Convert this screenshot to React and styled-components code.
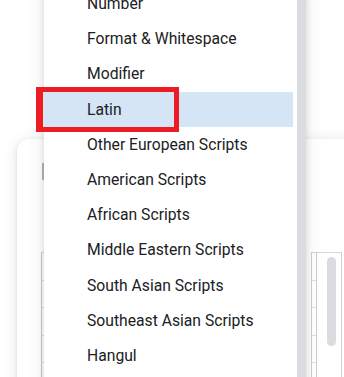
import React from "react";
import styled, { createGlobalStyle } from "styled-components";

const GlobalStyle = createGlobalStyle`
  html, body { margin: 0; padding: 0; background: #ffffff; overflow: hidden; }
  body { font-family: Roboto, "Noto Sans", Arial, sans-serif; }
  * { box-sizing: border-box; }
`;

const Stage = styled.div`
  position: relative;
  width: 344px;
  height: 377px;
  overflow: hidden;
  background: #ffffff;
  padding: 139px 0 0 17px;
`;

const Card = styled.div`
  width: 420px;
  height: 320px;
  background: #ffffff;
  border-radius: 12px 0 0 0;
  box-shadow: 0 1px 3px rgba(60, 64, 67, 0.12), 0 2px 14px rgba(60, 64, 67, 0.14);
  display: flex;
  flex-direction: column;
  padding: 24px 0 0 25px;
`;

const Caret = styled.div`
  width: 2px;
  height: 17px;
  background: #b3b3b3;
`;

const Grid = styled.div`
  display: flex;
  margin-top: 72px;
  margin-left: -1px;
  align-items: flex-start;
`;

const MainCol = styled.div`
  width: 265px;
  border-left: 1px solid #c9c9c9;
  border-top: 1px solid #d6d6d6;
  display: flex;
  flex-direction: column;
`;

const StubCol = styled.div`
  width: 5px;
  margin-left: 5px;
  border-left: 1px solid #d0d0d0;
  border-top: 1px solid #d6d6d6;
  display: flex;
  flex-direction: column;
`;

const Cell = styled.div`
  height: ${(p) => p.$h}px;
  border-bottom: 1px solid #dedede;
`;

const ScrollCol = styled.div`
  width: 26px;
  height: 200px;
  border-left: 1px solid #d0d0d0;
  border-right: 1px solid #d0d0d0;
  border-top: 1px solid #d6d6d6;
  padding: 4px 0 0 10px;
`;

const Thumb = styled.div`
  width: 9px;
  height: 89px;
  border-radius: 5px;
  background: #dadce0;
`;

const Menu = styled.div`
  position: absolute;
  left: 44px;
  top: -14px;
  width: 262px;
  height: 440px;
  background: #ffffff;
  display: flex;
  box-shadow: 0 2px 6px rgba(60, 64, 67, 0.15), 0 4px 16px rgba(60, 64, 67, 0.12);
`;

const List = styled.ul`
  list-style: none;
  margin: 0;
  padding: 0;
  width: 249px;
  display: flex;
  flex-direction: column;
`;

const Item = styled.li`
  height: 35.2px;
  flex: none;
  display: flex;
  align-items: center;
  padding-left: 43px;
  font-size: 15.7px;
  color: #202124;
  white-space: nowrap;
  background: ${(p) => (p.$active ? "#d5e5f6" : "transparent")};
`;

const MenuScroll = styled.div`
  width: 9px;
  margin-left: 4px;
  background: #dadce0;
`;

const Highlight = styled.div`
  position: absolute;
  left: 36px;
  top: 87px;
  width: 143px;
  height: 45px;
  border: 5px solid #ed1c24;
  border-left-width: 7px;
  pointer-events: none;
`;

const items = [
  "Number",
  "Format & Whitespace",
  "Modifier",
  "Latin",
  "Other European Scripts",
  "American Scripts",
  "African Scripts",
  "Middle Eastern Scripts",
  "South Asian Scripts",
  "Southeast Asian Scripts",
  "Hangul",
  "Other East Asian Scripts",
];

const rowHeights = [28, 27, 28, 27, 28, 27];

export default function App() {
  return (
    <>
      <GlobalStyle />
      <Stage>
        <Card>
          <Caret />
          <Grid>
            <MainCol>
              {rowHeights.map((h, i) => (
                <Cell key={i} $h={h} />
              ))}
            </MainCol>
            <StubCol>
              {rowHeights.map((h, i) => (
                <Cell key={i} $h={h} />
              ))}
            </StubCol>
            <ScrollCol>
              <Thumb />
            </ScrollCol>
          </Grid>
        </Card>
        <Menu>
          <List>
            {items.map((t) => (
              <Item key={t} $active={t === "Latin"}>
                {t}
              </Item>
            ))}
          </List>
          <MenuScroll />
        </Menu>
        <Highlight />
      </Stage>
    </>
  );
}
